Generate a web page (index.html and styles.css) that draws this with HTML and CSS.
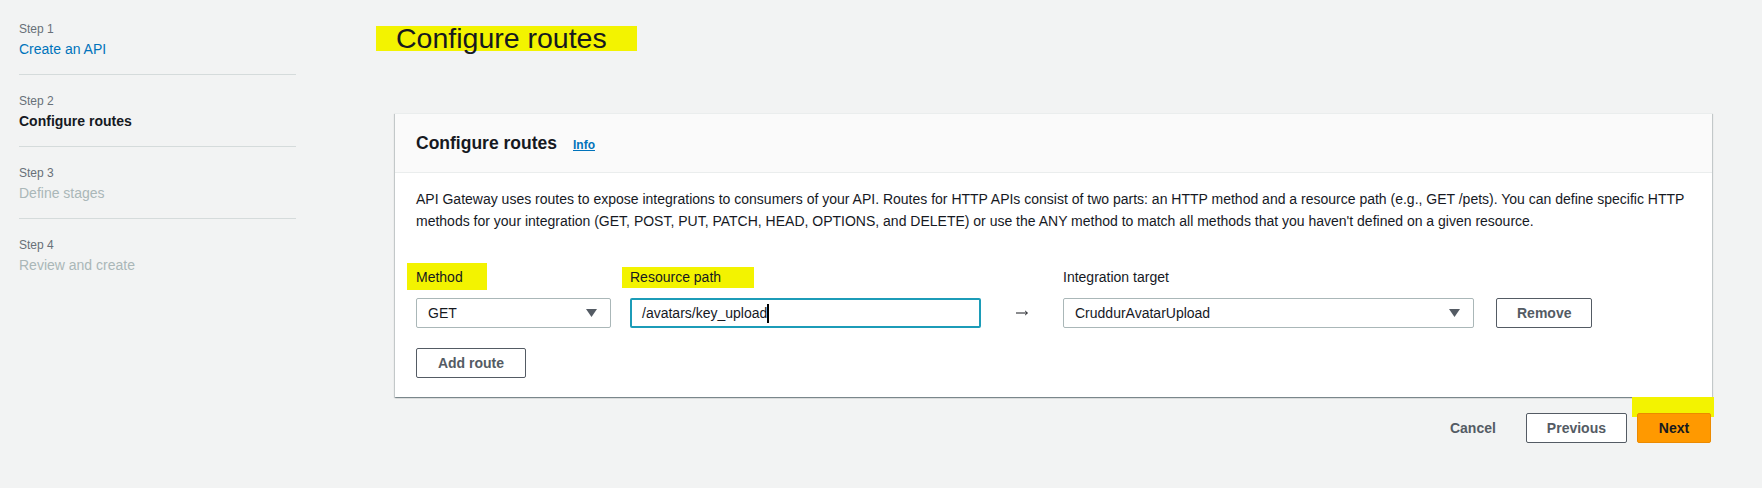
FILE: index.html
```html
<!DOCTYPE html>
<html lang="en">
<head>
<meta charset="utf-8">
<title>Configure routes</title>
<link rel="stylesheet" href="styles.css">
</head>
<body>
<div class="page">
  <nav class="steps">
    <div class="step">
      <div class="step-num">Step 1</div>
      <a class="step-title link" href="#">Create an API</a>
    </div>
    <div class="step">
      <div class="step-num">Step 2</div>
      <div class="step-title current">Configure routes</div>
    </div>
    <div class="step">
      <div class="step-num">Step 3</div>
      <div class="step-title disabled">Define stages</div>
    </div>
    <div class="step last">
      <div class="step-num">Step 4</div>
      <div class="step-title disabled">Review and create</div>
    </div>
  </nav>

  <main class="main">
    <h1 class="page-title"><span class="hl-title">Configure routes</span></h1>

    <section class="card">
      <header class="card-header">
        <h2 class="card-title">Configure routes</h2>
        <a class="info" href="#">Info</a>
      </header>
      <div class="card-body">
        <p class="desc">API Gateway uses routes to expose integrations to consumers of your API. Routes for HTTP APIs consist of two parts: an HTTP method and a resource path (e.g., GET /pets). You can define specific HTTP methods for your integration (GET, POST, PUT, PATCH, HEAD, OPTIONS, and DELETE) or use the ANY method to match all methods that you haven't defined on a given resource.</p>

        <div class="route-row">
          <div class="field f-method">
            <div class="label"><span class="hl-label hl-method">Method</span></div>
            <div class="select">
              <span class="select-value">GET</span>
              <svg class="caret" width="11" height="8" viewBox="0 0 11 8"><polygon points="0,0 11,0 5.5,8" fill="#545b64"/></svg>
            </div>
          </div>
          <div class="field f-path">
            <div class="label"><span class="hl-label hl-path">Resource path</span></div>
            <div class="input focused"><span class="input-value">/avatars/key_upload</span><span class="text-cursor"></span></div>
          </div>
          <div class="arrow">
            <svg width="12" height="6" viewBox="0 0 12 6"><path d="M0 3H11.3M9.2 1L11.4 3L9.2 5" fill="none" stroke="#16191f" stroke-width="1"/></svg>
          </div>
          <div class="field f-target">
            <div class="label">Integration target</div>
            <div class="select">
              <span class="select-value">CruddurAvatarUpload</span>
              <svg class="caret" width="11" height="8" viewBox="0 0 11 8"><polygon points="0,0 11,0 5.5,8" fill="#545b64"/></svg>
            </div>
          </div>
          <button class="btn">Remove</button>
        </div>

        <button class="btn add-route">Add route</button>
      </div>
    </section>

    <div class="actions">
      <button class="btn-link">Cancel</button>
      <button class="btn">Previous</button>
      <button class="btn btn-primary">Next</button>
    </div>
  </main>
</div>
</body>
</html>
```

FILE: styles.css
```css
html, body {
  margin: 0;
  padding: 0;
  background: #f2f3f3;
}

body {
  font-family: "Liberation Sans", Arial, sans-serif;
  color: #16191f;
  font-size: 14px;
}

.page {
  display: flex;
  align-items: flex-start;
}

/* ---------- Steps nav ---------- */
.steps {
  margin-left: 19px;
  width: 277px;
  padding-top: 3px;
}

.step {
  padding: 18px 0 15px;
  border-bottom: 1px solid #d5dbdb;
}

.step.last {
  border-bottom: none;
}

.step-num {
  font-size: 12px;
  line-height: 16px;
  color: #687078;
  margin-bottom: 2px;
}

.step-title {
  display: block;
  font-size: 14px;
  line-height: 20px;
  text-decoration: none;
}

.step-title.link {
  color: #0073bb;
}

.step-title.current {
  font-weight: bold;
  color: #16191f;
}

.step-title.disabled {
  color: #aab7b8;
}

/* ---------- Main ---------- */
.main {
  margin-left: 99px;
  width: 1317px;
}

.page-title {
  margin: 26px 0 0;
  font-size: 28.5px;
  font-weight: normal;
  line-height: 25px;
  height: 25px;
}

.hl-title {
  display: inline-block;
  height: 25px;
  line-height: 25px;
  background: #f3f300;
  margin-left: -19px;
  padding: 0 30px 0 20px;
  color: #16191f;
}

/* ---------- Card ---------- */
.card {
  margin-top: 62px;
  background: #ffffff;
  border-top: 1px solid #eaeded;
  box-shadow: 0 1px 1px 0 rgba(0, 28, 36, 0.3),
              1px 1px 1px 0 rgba(0, 28, 36, 0.15),
              -1px 1px 1px 0 rgba(0, 28, 36, 0.15);
}

.card-header {
  display: flex;
  align-items: center;
  height: 58px;
  padding: 0 21px;
  background: #fafafa;
  border-bottom: 1px solid #eaeded;
}

.card-title {
  margin: 0;
  font-size: 17.5px;
  font-weight: bold;
  line-height: 22px;
  color: #16191f;
}

.info {
  margin-left: 16px;
  margin-top: 3px;
  font-size: 12px;
  font-weight: bold;
  color: #0073bb;
  text-decoration: underline;
}

.card-body {
  padding: 15px 20px 19px 21px;
}

.desc {
  margin: 0;
  font-size: 14px;
  line-height: 22px;
  color: #16191f;
}

.route-row {
  display: flex;
  align-items: flex-end;
  margin-top: 34px;
}

.field {
  display: flex;
  flex-direction: column;
}

.f-method {
  width: 195px;
  margin-right: 19px;
}

.f-path {
  width: 351px;
}

.f-target {
  width: 411px;
  margin-right: 22px;
}

.label {
  font-size: 14px;
  line-height: 22px;
  margin-bottom: 10px;
  color: #16191f;
  white-space: nowrap;
}

.hl-label {
  background: #f3f300;
}

.hl-method {
  margin-left: -9px;
  padding: 6px 24px 5px 9px;
}

.hl-path {
  margin-left: -8px;
  padding: 2px 33px 3px 8px;
}

.select {
  box-sizing: border-box;
  height: 30px;
  border: 1px solid #aab7b8;
  border-radius: 2px;
  background: #fff;
  display: flex;
  align-items: center;
  justify-content: space-between;
  padding: 0 13px 0 11px;
}

.select-value {
  font-size: 14px;
  color: #16191f;
}

.input {
  box-sizing: border-box;
  height: 30px;
  border: 2px solid #1c9cb8;
  border-radius: 2px;
  background: #fff;
  display: flex;
  align-items: center;
  padding: 0 10px;
}

.input-value {
  font-size: 14px;
  color: #16191f;
}

.text-cursor {
  display: inline-block;
  width: 1.5px;
  height: 19px;
  background: #000;
}

.arrow {
  width: 82px;
  height: 30px;
  display: flex;
  align-items: center;
  justify-content: center;
}

/* ---------- Buttons ---------- */
.btn {
  box-sizing: border-box;
  height: 30px;
  padding: 0 20px;
  border: 1px solid #545b64;
  border-radius: 2px;
  background: #ffffff;
  color: #545b64;
  font-family: "Liberation Sans", Arial, sans-serif;
  font-size: 14px;
  font-weight: bold;
  line-height: 28px;
  cursor: pointer;
}

.add-route {
  display: block;
  margin-top: 20px;
  width: 110px;
}

.btn-link {
  height: 30px;
  padding: 0 20px;
  border: none;
  background: transparent;
  color: #545b64;
  font-family: "Liberation Sans", Arial, sans-serif;
  font-size: 14px;
  font-weight: bold;
}

.actions {
  position: relative;
  display: flex;
  justify-content: flex-end;
  gap: 10px;
  margin-top: 16px;
  padding-right: 1px;
}

.actions::before {
  content: "";
  position: absolute;
  right: -2px;
  top: -16px;
  width: 82px;
  height: 20px;
  background: #f3f300;
}

.btn-primary {
  position: relative;
  width: 74px;
  background: #ff9900;
  border-color: #ec8a00;
  color: #16191f;
}
```
